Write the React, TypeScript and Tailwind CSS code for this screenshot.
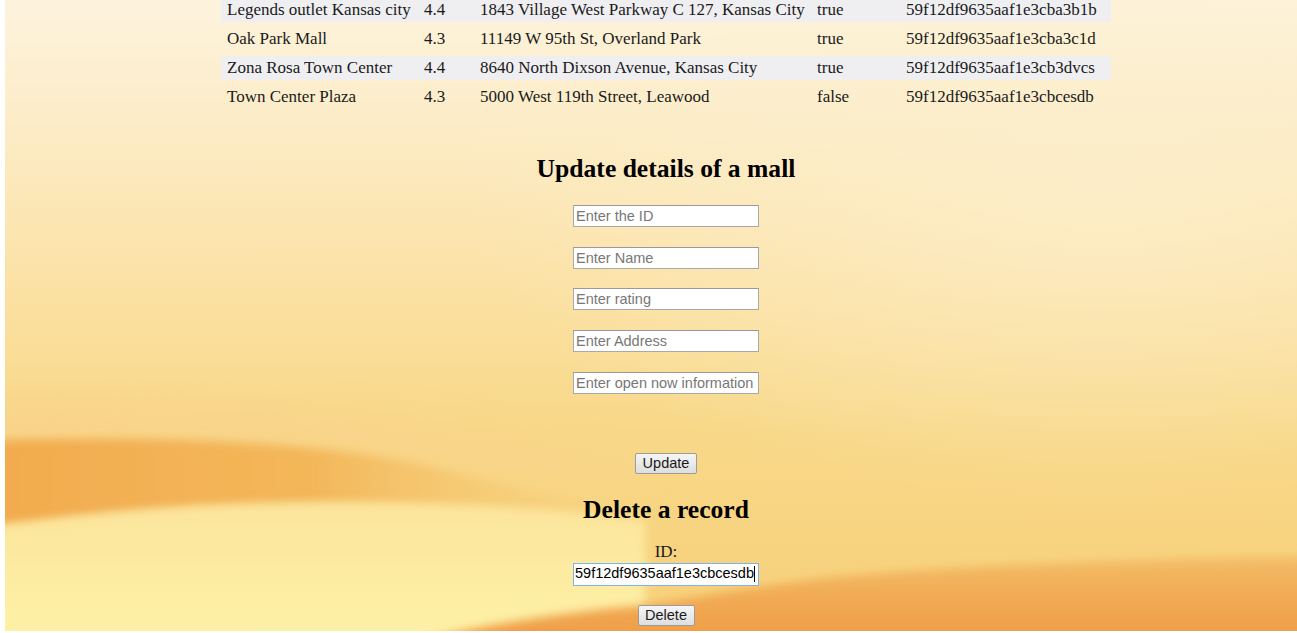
const malls = [
  { name: "Legends outlet Kansas city", rating: "4.4", address: "1843 Village West Parkway C 127, Kansas City", open: "true", id: "59f12df9635aaf1e3cba3b1b" },
  { name: "Oak Park Mall", rating: "4.3", address: "11149 W 95th St, Overland Park", open: "true", id: "59f12df9635aaf1e3cba3c1d" },
  { name: "Zona Rosa Town Center", rating: "4.4", address: "8640 North Dixson Avenue, Kansas City", open: "true", id: "59f12df9635aaf1e3cb3dvcs" },
  { name: "Town Center Plaza", rating: "4.3", address: "5000 West 119th Street, Leawood", open: "false", id: "59f12df9635aaf1e3cbcesdb" },
];

const placeholders = ["Enter the ID", "Enter Name", "Enter rating", "Enter Address", "Enter open now information"];

// sunset wallpaper behind the page
const Wallpaper = () => (
  <svg className="absolute left-[5px] top-0 w-[1292px] h-[631px]" viewBox="0 0 1292 631" preserveAspectRatio="none">
    <defs>
      <linearGradient id="base" x1="0" y1="0" x2="0" y2="1">
        <stop offset="0" stopColor="#fdf3dd" />
        <stop offset="0.22" stopColor="#fcebc4" />
        <stop offset="0.45" stopColor="#fbe1a4" />
        <stop offset="0.68" stopColor="#f8d888" />
        <stop offset="1" stopColor="#f7d07a" />
      </linearGradient>
      <radialGradient id="glowR" cx="0.85" cy="0.3" r="0.5">
        <stop offset="0" stopColor="#fdf0cf" stopOpacity="0.7" />
        <stop offset="1" stopColor="#fdf0cf" stopOpacity="0" />
      </radialGradient>
      <linearGradient id="band" x1="0" y1="0" x2="1" y2="0">
        <stop offset="0" stopColor="#f2ab4e" />
        <stop offset="0.5" stopColor="#f3b75a" />
        <stop offset="1" stopColor="#f6cc78" stopOpacity="0" />
      </linearGradient>
      <linearGradient id="low" x1="0" y1="0" x2="0" y2="1">
        <stop offset="0" stopColor="#fce49c" />
        <stop offset="1" stopColor="#fdf2a6" />
      </linearGradient>
      <linearGradient id="hill" x1="0" y1="0" x2="0" y2="1">
        <stop offset="0" stopColor="#f4bd68" />
        <stop offset="0.5" stopColor="#f1a851" />
        <stop offset="1" stopColor="#ee9a45" />
      </linearGradient>
      <filter id="soft" x="-0.1" y="-0.3" width="1.2" height="1.6">
        <feGaussianBlur stdDeviation="5" />
      </filter>
      <filter id="softer" x="-0.2" y="-0.5" width="1.4" height="2">
        <feGaussianBlur stdDeviation="14" />
      </filter>
    </defs>
    <rect width="1292" height="631" fill="url(#base)" />
    <rect width="1292" height="631" fill="url(#glowR)" />
    <path d="M-20 400 C 200 395, 420 410, 650 470 C 500 480, 300 430, -20 450 Z" fill="#f8d48a" filter="url(#softer)" />
    <path d="M-20 440 C 150 436, 320 440, 440 470 C 520 490, 600 505, 640 520 C 520 505, 380 500, 240 505 C 140 508, 60 518, -20 528 Z" fill="url(#band)" filter="url(#soft)" />
    <path d="M-20 528 C 60 518, 140 508, 240 505 C 380 500, 520 505, 640 520 L 640 640 L -20 640 Z" fill="url(#low)" filter="url(#soft)" />
    <path d="M380 650 C 470 625, 560 612, 650 604 C 700 596, 740 588, 820 578 C 950 566, 1100 560, 1320 556 L 1320 650 Z" fill="url(#hill)" filter="url(#soft)" />
  </svg>
);

const Field = ({ placeholder }: { placeholder: string }) => (
  <input
    type="text"
    placeholder={placeholder}
    className="w-[186px] h-[22px] bg-white border border-[#a9a9a9] border-t-[#9a9a9a] px-[2px] font-['Liberation_Sans'] text-[14.5px] text-black placeholder:text-[#777] outline-none"
  />
);

const OldButton = ({ label, w }: { label: string; w: string }) => (
  <button
    className={`${w} h-[21px] border border-[#9c9c9c] rounded-[2px] bg-gradient-to-b from-[#f6f6f6] to-[#dedede] font-['Liberation_Sans'] text-[14.5px] leading-none text-[#1a1a1a]`}
  >
    {label}
  </button>
);

const App = () => {
  return (
    <div className="relative h-[633px] overflow-hidden bg-white font-['Liberation_Serif',serif] text-[#1a1a1a]">
      <Wallpaper />
      <div className="relative flex flex-col items-center pl-[35px]">
        <table className="w-[890px] -mt-[7px] border-separate border-spacing-x-0 border-spacing-y-[5px] text-[17px] table-fixed">
          <colgroup>
            <col className="w-[197px]" />
            <col className="w-[56px]" />
            <col className="w-[337px]" />
            <col className="w-[89px]" />
            <col className="w-[211px]" />
          </colgroup>
          <tbody>
            {malls.map((m, i) => (
              <tr key={m.id} className={i % 2 === 0 ? "bg-[#efeff2]" : ""}>
                <td className="h-[24px] p-0 pl-[6px] whitespace-nowrap leading-[24px]">{m.name}</td>
                <td className="h-[24px] p-0 pl-[6px] leading-[24px]">{m.rating}</td>
                <td className="h-[24px] p-0 pl-[6px] whitespace-nowrap leading-[24px]">{m.address}</td>
                <td className="h-[24px] p-0 pl-[6px] leading-[24px]">{m.open}</td>
                <td className="h-[24px] p-0 pl-[6px] whitespace-nowrap leading-[24px]">{m.id}</td>
              </tr>
            ))}
          </tbody>
        </table>

        <h2 className="mt-[41px] text-[25.6px] leading-[28px] font-bold text-black">Update details of a mall</h2>
        <div className="mt-[22px] flex flex-col gap-[19.7px]">
          {placeholders.map((p) => (
            <Field key={p} placeholder={p} />
          ))}
        </div>
        <div className="mt-[59px] flex">
          <OldButton label="Update" w="w-[62px]" />
        </div>

        <h2 className="mt-[22px] text-[25.6px] leading-[28px] font-bold text-black">Delete a record</h2>
        <div className="mt-[18px] text-[17px] leading-[19px]">ID:</div>
        <div className="mt-[2px] w-[186px] h-[23px] bg-white border border-[#7eb4ea] flex items-center pl-[1px] font-['Liberation_Sans'] text-[14.5px] text-black">
          <span>59f12df9635aaf1e3cbcesdb</span>
          <span className="w-px h-[16px] bg-black" />
        </div>
        <div className="mt-[19px] flex">
          <OldButton label="Delete" w="w-[57px]" />
        </div>
      </div>
    </div>
  );
};

export default App;
